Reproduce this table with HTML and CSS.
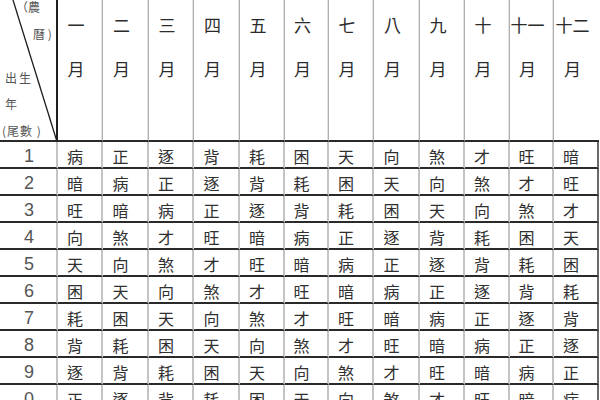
FILE: index.html
```html
<!DOCTYPE html>
<html lang="zh-Hant">
<head>
<meta charset="utf-8">
<title>農曆月份表</title>
<link rel="stylesheet" href="styles.css">
</head>
<body>
<div class="sheet" id="sheet">
  <div class="corner">
    <svg class="diag" width="58" height="142" viewBox="0 0 58 142"><line x1="13" y1="0" x2="56.5" y2="140" stroke="#1e1e1e" stroke-width="1.3"/></svg>
    <div class="c-l1">（農</div>
    <div class="c-l2">曆 )</div>
    <div class="c-l3">出生</div>
    <div class="c-l4">年</div>
    <div class="c-l5">(尾數 )</div>
  </div>
  <div class="mh">一<br>月</div>
  <div class="mh">二<br>月</div>
  <div class="mh">三<br>月</div>
  <div class="mh">四<br>月</div>
  <div class="mh">五<br>月</div>
  <div class="mh">六<br>月</div>
  <div class="mh">七<br>月</div>
  <div class="mh">八<br>月</div>
  <div class="mh">九<br>月</div>
  <div class="mh">十<br>月</div>
  <div class="mh">十一<br>月</div>
  <div class="mh last">十二<br>月</div>
</div>
<script src="app.js"></script>
</body>
</html>
```

FILE: app.js
```js
(function () {
  var seq = ['病','正','逐','背','耗','困','天','向','煞','才','旺','暗'];
  var rows = [
    ['1', 0], ['2', 11], ['3', 10], ['4', 7], ['5', 6],
    ['6', 5], ['7', 4], ['8', 3], ['9', 2], ['0', 1]
  ];
  var sheet = document.getElementById('sheet');
  rows.forEach(function (r) {
    var n = document.createElement('div');
    n.className = 'num';
    n.textContent = r[0];
    sheet.appendChild(n);
    for (var i = 0; i < 12; i++) {
      var c = document.createElement('div');
      c.className = 'cell' + (i === 11 ? ' last' : '');
      c.textContent = seq[(r[1] + i) % 12];
      sheet.appendChild(c);
    }
  });
})();
```

FILE: styles.css
```css
html, body {
  margin: 0;
  padding: 0;
  background: #ffffff;
}

body {
  width: 600px;
  height: 400px;
  overflow: hidden;
}

.sheet {
  display: grid;
  grid-template-columns: 58px 45px 46px 45px 46px 45px 44px 45px 46px 45px 45px 44px 45px;
  grid-template-rows: 142px repeat(10, 27px);
  font-family: "Noto Sans CJK TC", "Noto Sans CJK SC", sans-serif;
  color: #333;
}

.sheet > div {
  box-sizing: border-box;
  border-bottom: 2px solid #2a2a2a;
  border-right: 2px solid #c4c4c4;
}

.corner {
  position: relative;
  border-right: 2px solid #1e1e1e !important;
  font-size: 12px;
  line-height: 14px;
  color: #555;
}

.diag {
  position: absolute;
  left: 0;
  top: 0;
}

.c-l1 { margin-left: 16px; margin-top: 0; }
.c-l2 { margin-left: 33px; margin-top: 13px; }
.c-l3 { margin-left: 5px; margin-top: 30px; letter-spacing: 2px; }
.c-l4 { margin-left: 5px; margin-top: 12px; }
.c-l5 { margin-left: 2px; margin-top: 13px; letter-spacing: 1px; }

.mh {
  font-size: 17px;
  line-height: 44px;
  padding-top: 3px;
  padding-right: 8px;
  text-align: center;
  color: #2b2b2b;
  border-right: 1px solid #b0b0b0 !important;
  box-shadow: inset -1px 0 0 #e2e2e2;
}

.mh.last {
  border-right: none !important;
  box-shadow: none;
}

.num {
  font-family: "Liberation Sans", Arial, sans-serif;
  font-size: 18px;
  line-height: 25px;
  padding-top: 2px;
  padding-left: 2px;
  text-align: center;
  color: #555;
}

.cell {
  font-size: 16px;
  line-height: 25px;
  padding-top: 2px;
  padding-right: 9px;
  text-align: center;
  color: #303030;
}

.cell.last {
  border-right: 2px solid #6a6a6a !important;
}
```
